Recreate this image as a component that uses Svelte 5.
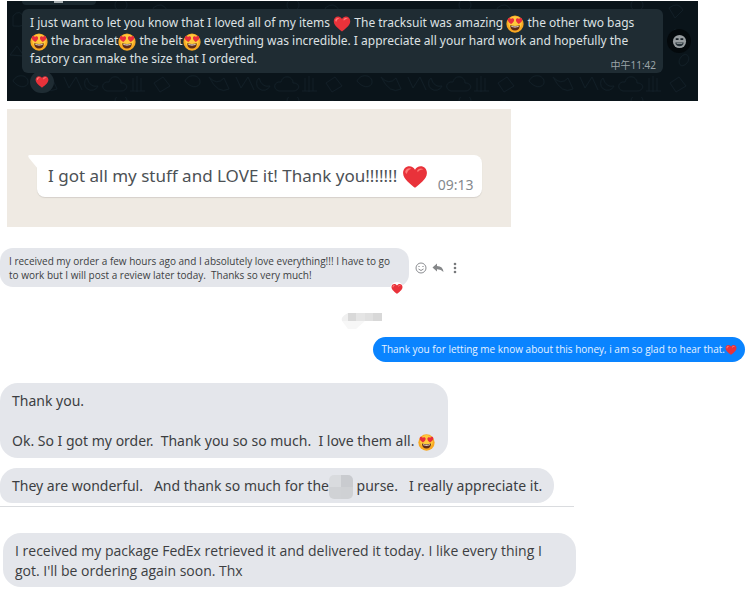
<script lang="ts">
	type Part = { text?: string; icon?: 'heart' | 'eyes' | 'hidden' };

	const t = (text: string): Part => ({ text });
	const heart: Part = { icon: 'heart' };
	const eyes: Part = { icon: 'eyes' };
	const hidden: Part = { icon: 'hidden' };

	const darkLines: Part[][] = [
		[
			t('I just want to let you know that I loved all of my items '),
			heart,
			t(' The tracksuit was amazing '),
			eyes,
			t(' the other two bags')
		],
		[
			eyes,
			t(' the bracelet'),
			eyes,
			t(' the belt'),
			eyes,
			t(' everything was incredible. I appreciate all your hard work and hopefully the')
		],
		[t('factory can make the size that I ordered.')]
	];

	const lightLines: Part[][] = [[t('I got all my stuff and LOVE it! Thank you!!!!!!! '), heart]];

	const receivedLines: Part[][] = [
		[t('I received my order a few hours ago and I absolutely love everything!!! I have to go')],
		[t('to work but I will post a review later today.  Thanks so very much!')]
	];

	const replyLines: Part[][] = [
		[t('Thank you for letting me know about this honey, i am so glad to hear that.'), heart]
	];

	const thanksLines: Part[][] = [
		[t('Thank you.')],
		[t(' ')],
		[t('Ok. So I got my order.  Thank you so so much.  I love them all. '), eyes]
	];

	const purseLines: Part[][] = [
		[
			t('They are wonderful.   And thank so much for the'),
			hidden,
			t(' purse.   I really appreciate it.')
		]
	];

	const fedexLines: Part[][] = [
		[t('I received my package FedEx retrieved it and delivered it today. I like every thing I')],
		[t("got. I'll be ordering again soon. Thx")]
	];
</script>

{#snippet heartIcon()}
	<svg class="emoji" viewBox="0 0 24 24" aria-label="red heart" role="img">
		<path
			d="M12 22C9 19 1 14.500 1 8.200C1 4.500 3.700 2 6.800 2C9 2 11 3.200 12 5.200C13 3.200 15 2 17.200 2C20.300 2 23 4.500 23 8.200C23 14.500 15 19 12 22Z"
			fill="#e9323a"
		/>
		<path d="M3 7C3.500 4.500 6 3.300 8.500 4.300C6.500 5 5 6.500 4.500 9C3.500 9 3 8 3 7Z" fill="#ff7b78" />
		<path d="M14 6C15.500 3.800 18 3.500 20 5C18 5 16 5.500 14.500 7.500Z" fill="#ff7b78" />
	</svg>
{/snippet}

{#snippet eyesIcon()}
	<svg class="emoji" viewBox="0 0 24 24" aria-label="heart eyes" role="img">
		<circle cx="12" cy="12" r="11.500" fill="#f8a823" />
		<circle cx="12" cy="10.500" r="9" fill="#ffc93c" />
		<path
			d="M7 12C4.500 10.500 2 8.500 2.400 5.800C2.800 3.500 5.800 3.500 6.600 5.200C7.900 3.800 10.800 4.300 10.800 6.800C10.800 9 8.600 11 7 12Z"
			fill="#e82f3c"
		/>
		<path
			d="M17 12C19.500 10.500 22 8.500 21.600 5.800C21.200 3.500 18.200 3.500 17.400 5.200C16.100 3.800 13.200 4.300 13.200 6.800C13.200 9 15.400 11 17 12Z"
			fill="#e82f3c"
		/>
		<path d="M5.500 13.500Q12 15.500 18.500 13.500Q18 20.500 12 20.500Q6 20.500 5.500 13.500Z" fill="#5f2a17" />
		<path d="M7 14.500Q12 16 17 14.500L16.500 16Q12 17 7.500 16Z" fill="#fff" />
	</svg>
{/snippet}

{#snippet message(lines: Part[][])}
	{#each lines as line}
		<p>
			{#each line as part}{#if part.text}{part.text}{:else if part.icon === 'heart'}{@render heartIcon()}{:else if part.icon === 'eyes'}{@render eyesIcon()}{:else}<span
						class="redacted"
					></span>{/if}{/each}
		</p>
	{/each}
{/snippet}

<main>
	<section class="panel dark">
		<svg class="doodles" width="100%" height="100%" aria-hidden="true">
			<defs>
				<pattern id="doodles" width="172" height="96" patternUnits="userSpaceOnUse">
					<g fill="none" stroke="#111e26" stroke-width="1">
						<path d="M6 80c4-8 14-6 15 0s-8 9-15 0M30 76q8 9 15 1l5 11q-11 6-20-12" />
						<path d="M57 76l5 11 7-11 6 13M80 77a7 7 0 1 0 11 8q-8 2-11-8" />
						<path d="M100 90c-7-2-5-10 2-9 2-8 12-6 12 1 8 0 7 8 0 8z" />
						<path d="M126 77v13M130 75v16M134 77v13M123 90h15M147 82l9-6 7 9-10 6z" />
						<path d="M3 54l7-9 7 10zM6 15q7-8 11 2t-11 8zM152 28l8 5-4 9-9-6z" />
						<path d="M158 56c6-7 11 2 5 7s-9-2-5-7M146 7q9-7 14 2l-8 8z" />
						<circle cx="114" cy="4" r="6" />
					</g>
				</pattern>
			</defs>
			<rect width="100%" height="100%" fill="url(#doodles)" />
		</svg>
		<div class="previous"><span></span></div>
		<div class="row">
			<article class="bubble night">
				{@render message(darkLines)}
				<time>中午11:42</time>
			</article>
			<button class="react" aria-label="React">
				<svg viewBox="0 0 16 16">
					<circle cx="8" cy="8" r="7" fill="#989da0" />
					<path d="M4 5.500h3M9 5.500h3" stroke="#182127" stroke-width="2" />
					<path d="M3.500 9h9Q12 13 8 13T3.500 9z" fill="#253037" />
					<path d="M5 10h6" stroke="#989da0" />
				</svg>
			</button>
		</div>
		<div class="reaction">{@render heartIcon()}</div>
	</section>

	<section class="panel light">
		<article class="bubble day">
			<svg class="tail" viewBox="0 0 10 14" aria-hidden="true">
				<path d="M2 0H10V14L1 3Q-1 0 2 0Z" fill="#fff" />
			</svg>
			<div>{@render message(lightLines)}</div>
			<time>09:13</time>
		</article>
	</section>

	<div class="row received">
		<article class="bubble small">
			{@render message(receivedLines)}
			<span class="badge">{@render heartIcon()}</span>
		</article>
		<div class="actions">
			<button aria-label="React">
				<svg viewBox="0 0 12 12" fill="none" stroke="#8b8d91">
					<circle cx="6" cy="6" r="5" />
					<path d="M3.500 7Q6 10 8.500 7" />
					<path d="M4 4v1M8 4v1" stroke-width="1.200" />
				</svg>
			</button>
			<button aria-label="Reply">
				<svg viewBox="0 0 12 12">
					<path d="M5 1.500V4Q11 4 11.500 10Q9 7 5 7.200V9.500L.5 5.500Z" fill="#858789" />
				</svg>
			</button>
			<button aria-label="More">
				<svg viewBox="0 0 12 12" fill="#77797c">
					<circle cx="6" cy="2" r="1.300" />
					<circle cx="6" cy="6" r="1.300" />
					<circle cx="6" cy="10" r="1.300" />
				</svg>
			</button>
		</div>
	</div>

	<svg class="sender" viewBox="0 0 42 16" aria-hidden="true">
		<path d="M8 0v8H2Q0 4 8 0" fill="#f0f0f0" />
		<path d="M8 0h8v8H8z" fill="#d9d9d9" />
		<path d="M16 0h9v8h-9z" fill="#e5e5e5" />
		<path d="M25 0h8v8h-8z" fill="#e0e0e0" />
		<path d="M33 0h9v8h-9z" fill="#d8d8d8" />
		<path d="M2 8h23l-9 8H8z" fill="#f7f7f7" />
	</svg>

	<article class="bubble sent">{@render message(replyLines)}</article>

	<article class="bubble large thanks">{@render message(thanksLines)}</article>
	<article class="bubble large purse">{@render message(purseLines)}</article>
	<hr />
	<article class="bubble large fedex">{@render message(fedexLines)}</article>
</main>

<style>
	:global(body) {
		margin: 0;
		background: #fff;
	}

	main {
		display: flex;
		flex-direction: column;
		align-items: flex-start;
		padding: 1px 0 8px;
		font-family: 'Open Sans', 'Noto Sans', 'Noto Sans CJK SC', sans-serif;
		color: #3c3e42;
	}

	p {
		margin: 0;
		white-space: pre;
	}

	button {
		display: flex;
		align-items: center;
		justify-content: center;
		padding: 0;
		border: 0;
		background: none;
	}

	.emoji {
		width: 18px;
		height: 18px;
		vertical-align: middle;
	}

	.row {
		display: flex;
		align-items: center;
	}

	.panel {
		position: relative;
		box-sizing: border-box;
		margin-left: 7px;
	}

	.dark {
		align-self: stretch;
		margin-right: 48px;
		padding: 0 7px 8px 15px;
		background: #0a141a;
	}

	.doodles {
		position: absolute;
		inset: 0;
	}

	.dark .row {
		position: relative;
		gap: 4px;
	}

	.previous {
		position: relative;
		width: 74px;
		height: 4px;
		margin-bottom: 4px;
		border-radius: 0 0 8px 8px;
		background: #1b2930;
	}

	.previous span {
		position: absolute;
		left: 32px;
		width: 9px;
		height: 2px;
		background: #a9b0b3;
	}

	.bubble {
		position: relative;
		background: #e4e6eb;
	}

	.night {
		flex: 1;
		padding: 5px 8px;
		border-radius: 6px;
		background: #1f2c33;
		color: #dde1e3;
		font-family: 'Noto Sans', 'Noto Sans CJK SC', sans-serif;
		font-size: 12px;
		line-height: 18px;
	}

	.night p {
		height: 18px;
	}

	.night time {
		position: absolute;
		right: 7px;
		bottom: 1px;
		color: #9ba4a8;
		font-size: 10px;
		line-height: 14px;
	}

	.react {
		width: 24px;
		height: 24px;
		border-radius: 50%;
		background: #04090c;
	}

	.react svg {
		width: 15px;
	}

	.reaction {
		position: relative;
		display: flex;
		align-items: center;
		justify-content: center;
		width: 24px;
		height: 22px;
		margin: -2px 0 0 8px;
		border-radius: 12px;
		background: #1f2c33;
	}

	.reaction .emoji {
		width: 14px;
		height: 14px;
	}

	.light {
		margin-top: 8px;
		padding: 46px 29px 30px 30px;
		background: #efeae3;
	}

	.day {
		display: flex;
		align-items: flex-end;
		gap: 10px;
		padding: 0 9px 0 11px;
		border-radius: 0 8px 8px 8px;
		background: #fff;
		box-shadow: 0 1px 1px #d5d0ca;
		color: #4c5155;
		font-family: 'Noto Sans', 'Noto Sans CJK SC', sans-serif;
		font-size: 17px;
		line-height: 42px;
	}

	.day p {
		height: 42px;
	}

	.day .emoji {
		width: 26px;
		height: 26px;
	}

	.day time {
		color: #84898d;
		font-size: 14px;
		line-height: 24px;
	}

	.tail {
		position: absolute;
		top: 0;
		left: -9px;
		width: 10px;
		height: 14px;
	}

	.received {
		gap: 6px;
		margin-top: 21px;
	}

	.small {
		padding: 6px 19px 5px 9px;
		border-radius: 13px;
		font-size: 10px;
		line-height: 14px;
	}

	.badge {
		position: absolute;
		right: 5px;
		bottom: -9px;
		display: flex;
		padding: 1px;
		border-radius: 50%;
		background: #fff;
	}

	.badge .emoji {
		width: 12px;
		height: 12px;
	}

	.actions {
		display: flex;
		gap: 5px;
	}

	.actions svg {
		width: 12px;
		height: 12px;
	}

	.sender {
		width: 42px;
		height: 16px;
		margin: 26px 0 8px 340px;
	}

	.sent {
		align-self: flex-end;
		margin-right: 1px;
		padding: 0 8px;
		border-radius: 13px;
		background: #0a84ff;
		color: #e6f2ff;
		font-size: 10px;
		line-height: 25px;
	}

	.sent p {
		height: 25px;
	}

	.sent .emoji {
		width: 12px;
		height: 12px;
	}

	.large {
		font-size: 14px;
		line-height: 20px;
	}

	.thanks,
	.purse {
		font-family: 'Noto Sans', 'Noto Sans CJK SC', sans-serif;
	}

	.thanks {
		margin-top: 21px;
		padding: 8px 13px 7px 12px;
		border-radius: 18px;
	}

	.purse {
		margin-top: 10px;
		padding: 8px 12px 6px;
		border-radius: 17px 17px 17px 12px;
	}

	.large .emoji {
		width: 17px;
		height: 17px;
	}

	.redacted {
		display: inline-block;
		width: 24px;
		height: 24px;
		margin: -2px 0;
		border-radius: 5px;
		background: conic-gradient(#c9cbcf 25%, #cfd1d4 0 50%, #d0d2d5 0 75%, #d9dbde 0);
		vertical-align: middle;
	}

	hr {
		width: 77%;
		margin: 3px 0 0;
		border: 0;
		border-top: 1px solid #dadcdf;
	}

	.fedex {
		margin: 26px 0 0 3px;
		padding: 8px 34px 6px 12px;
		border-radius: 18px;
	}
</style>
